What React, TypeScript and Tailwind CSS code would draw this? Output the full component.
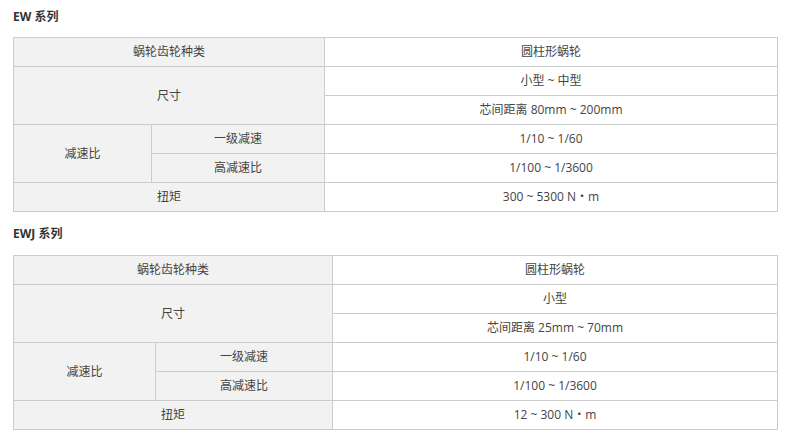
import React from 'react';

interface SeriesSpec {
  name: string;
  type: string;
  size: string;
  distance: string;
  ratioSingle: string;
  ratioHigh: string;
  torque: string;
  cols: [string, string, string];
}

const series: SeriesSpec[] = [
  {
    name: 'EW 系列',
    type: '圆柱形蜗轮',
    size: '小型 ~ 中型',
    distance: '芯间距离 80mm ~ 200mm',
    ratioSingle: '1/10 ~ 1/60',
    ratioHigh: '1/100 ~ 1/3600',
    torque: '300 ~ 5300 N・m',
    cols: ['w-[138px]', 'w-[173px]', 'w-[453px]'],
  },
  {
    name: 'EWJ 系列',
    type: '圆柱形蜗轮',
    size: '小型',
    distance: '芯间距离 25mm ~ 70mm',
    ratioSingle: '1/10 ~ 1/60',
    ratioHigh: '1/100 ~ 1/3600',
    torque: '12 ~ 300 N・m',
    cols: ['w-[142px]', 'w-[177px]', 'w-[445px]'],
  },
];

const head = 'h-[29px] border border-[#cccccc] bg-[#f2f2f2] p-0 text-center align-middle';
const cell = 'h-[29px] border border-[#cccccc] bg-white p-0 text-center align-middle';

const SpecTable: React.FC<{ spec: SeriesSpec }> = ({ spec }) => (
  <table className="w-[765px] table-fixed border-collapse text-[12px] text-[#444]">
    <colgroup>
      <col className={spec.cols[0]} />
      <col className={spec.cols[1]} />
      <col className={spec.cols[2]} />
    </colgroup>
    <tbody>
      <tr>
        <td colSpan={2} className={head}>蜗轮齿轮种类</td>
        <td className={cell}>{spec.type}</td>
      </tr>
      <tr>
        <td colSpan={2} rowSpan={2} className={head}>尺寸</td>
        <td className={cell}>{spec.size}</td>
      </tr>
      <tr>
        <td className={cell}>{spec.distance}</td>
      </tr>
      <tr>
        <td rowSpan={2} className={head}>减速比</td>
        <td className={head}>一级减速</td>
        <td className={cell}>{spec.ratioSingle}</td>
      </tr>
      <tr>
        <td className={head}>高减速比</td>
        <td className={cell}>{spec.ratioHigh}</td>
      </tr>
      <tr>
        <td colSpan={2} className={head}>扭矩</td>
        <td className={cell}>{spec.torque}</td>
      </tr>
    </tbody>
  </table>
);

export default function App() {
  return (
    <div
      className="min-h-[435px] w-[790px] bg-white pl-[13px]"
      style={{ fontFamily: '"Open Sans", "Noto Sans CJK SC", sans-serif' }}
    >
      {series.map((s, i) => (
        <div key={s.name}>
          <h3
            className={
              i === 0
                ? 'pt-[7px] pb-[10px] text-[12px] font-bold leading-[20px] text-[#333]'
                : 'pt-[12px] pb-[11px] text-[12px] font-bold leading-[20px] text-[#333]'
            }
          >
            {s.name}
          </h3>
          <SpecTable spec={s} />
        </div>
      ))}
    </div>
  );
}
